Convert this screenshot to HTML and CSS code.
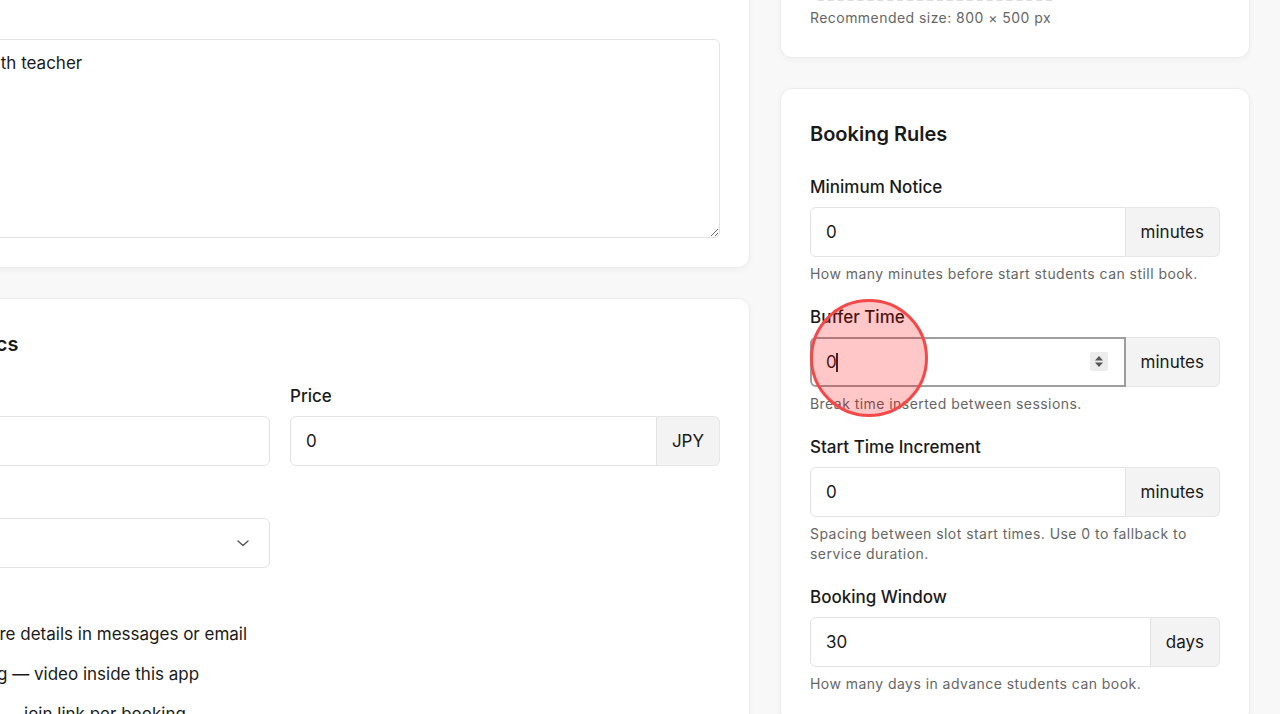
FILE: index.html
```html
<!DOCTYPE html>
<html lang="en">

<head>
    <meta charset="UTF-8">
    <title>Edit Service</title>
    <link rel="stylesheet" href="styles.css">
</head>

<body>
    <div class="page">
        <div class="col col-main">
            <section class="card">
                <h2>Service Details</h2>
                <div class="field">
                    <label>Service Name</label>
                    <input class="input" type="text" value="Private Lesson">
                </div>
                <div class="field">
                    <label>Subtitle</label>
                    <input class="input" type="text" value="Online session">
                </div>
                <div class="field">
                    <label>Description</label>
                    <textarea class="textarea">Private lessons with teacher</textarea>
                </div>
            </section>

            <section class="card">
                <h2>Pricing &amp; Logistics</h2>
                <div class="grid2">
                    <div class="field">
                        <label>Duration</label>
                        <input class="input" type="text" value="">
                    </div>
                    <div class="field">
                        <label>Price</label>
                        <div class="group">
                            <input class="input" type="text" value="0">
                            <span class="addon">JPY</span>
                        </div>
                    </div>
                    <div class="field">
                        <label>Location</label>
                        <div class="select-wrap">
                            <select class="select">
                                <option>Online</option>
                            </select>
                            <svg class="chevron" width="14" height="9" viewBox="0 0 14 9">
                                <polyline points="2,2 7,6.5 12,2" fill="none" stroke="#555" stroke-width="1.4" stroke-linecap="round" stroke-linejoin="round"/>
                            </svg>
                        </div>
                    </div>
                </div>
                <div class="field">
                    <label>Meeting Type</label>
                    <div class="radios">
                        <label class="radio"><span class="dot"></span>In-person — share details in messages or email</label>
                        <label class="radio"><span class="dot"></span>Built-in streaming — video inside this app</label>
                        <label class="radio"><span class="dot"></span>External session — join link per booking</label>
                    </div>
                </div>
            </section>
        </div>

        <div class="col col-side">
            <section class="card">
                <h2>Cover Image</h2>
                <div class="field">
                    <div class="dropzone"></div>
                    <p class="hint">Recommended size: 800 × 500 px</p>
                </div>
            </section>

            <section class="card rules">
                <h2>Booking Rules</h2>
                <div class="field">
                    <label>Minimum Notice</label>
                    <div class="group">
                        <input class="input" type="text" value="0">
                        <span class="addon">minutes</span>
                    </div>
                    <p class="hint">How many minutes before start students can still book.</p>
                </div>
                <div class="field">
                    <label>Buffer Time</label>
                    <div class="group">
                        <input class="input focused" type="text" value="0">
                        <span class="addon">minutes</span>
                        <span class="caret"></span>
                        <span class="spinner">
                            <svg width="18" height="19" viewBox="0 0 18 19">
                                <polygon points="9,4 13,8.5 5,8.5" fill="#555"/>
                                <polygon points="9,15 13,10.5 5,10.5" fill="#555"/>
                            </svg>
                        </span>
                        <span class="tap"></span>
                    </div>
                    <p class="hint">Break time inserted between sessions.</p>
                </div>
                <div class="field">
                    <label>Start Time Increment</label>
                    <div class="group">
                        <input class="input" type="text" value="0">
                        <span class="addon">minutes</span>
                    </div>
                    <p class="hint">Spacing between slot start times. Use 0 to fallback to service duration.</p>
                </div>
                <div class="field">
                    <label>Booking Window</label>
                    <div class="group">
                        <input class="input" type="text" value="30">
                        <span class="addon">days</span>
                    </div>
                    <p class="hint">How many days in advance students can book.</p>
                </div>
            </section>
        </div>
    </div>
</body>

</html>
```

FILE: styles.css
```css
body {
    margin: 0;
    overflow: hidden;
    background-color: #f8f8f8;
    font-family: Inter, "Noto Sans", sans-serif;
    color: #1a1a1a;
}

.page {
    display: flex;
    gap: 30px;
    margin-left: -190px;
    margin-top: -283px;
}

.col {
    display: flex;
    flex-direction: column;
    gap: 30px;
}

.col-main {
    width: 940px;
}

.col-side {
    width: 470px;
}

.card {
    background-color: #fff;
    border: 1px solid #ececec;
    border-radius: 12px;
    box-shadow: 0 2px 6px rgba(0, 0, 0, 0.04);
    padding: 29px;
    display: flex;
    flex-direction: column;
    gap: 20px;
}

.card.rules {
    gap: 21px;
}

.card h2 {
    margin: 0 0 6px;
    padding-top: 2px;
    font-size: 20px;
    font-weight: 600;
    line-height: 28px;
}

.field {
    display: flex;
    flex-direction: column;
}

.field > label {
    font-size: 17px;
    font-weight: 500;
    line-height: 24px;
    margin-bottom: 8px;
}

.input,
.select,
.textarea {
    box-sizing: border-box;
    width: 100%;
    border: 1px solid #e3e3e3;
    border-radius: 6px;
    background-color: #fff;
    font-family: inherit;
    font-size: 17px;
    color: #1a1a1a;
    outline: none;
}

.input,
.select {
    height: 50px;
    padding: 0 15px;
}

.textarea {
    height: 199px;
    padding: 11px 15px;
    line-height: 24px;
}

.grid2 {
    display: grid;
    grid-template-columns: 430px 430px;
    column-gap: 20px;
    row-gap: 20px;
}

.group {
    position: relative;
    display: flex;
}

.group .input {
    flex: 1;
    border-radius: 6px 0 0 6px;
}

.group .input.focused {
    border: 2px solid #9d9d9d;
    padding-left: 14px;
}

.addon {
    display: flex;
    align-items: center;
    padding: 0 15px;
    background-color: #f3f3f3;
    border: 1px solid #e6e6e6;
    border-left: none;
    border-radius: 0 6px 6px 0;
    font-size: 17px;
}

.hint {
    margin: 7px 0 0;
    font-size: 14px;
    line-height: 20px;
    letter-spacing: 0.45px;
    color: #666;
}

.select-wrap {
    position: relative;
}

.select {
    appearance: none;
    color: #1a1a1a;
}

.chevron {
    position: absolute;
    right: 20px;
    top: 21px;
    pointer-events: none;
}

.radios {
    display: flex;
    flex-direction: column;
    gap: 12px;
}

.radio {
    display: flex;
    align-items: center;
    gap: 10px;
    font-size: 17px;
    line-height: 28px;
}

.radio .dot {
    width: 16px;
    height: 16px;
    border: 1px solid #bbb;
    border-radius: 50%;
    box-sizing: border-box;
}

.dropzone {
    width: 250px;
    height: 198px;
    box-sizing: border-box;
    border: 2px dashed #dcdcdc;
    border-radius: 8px;
}

/* focused field decorations */
.caret {
    position: absolute;
    left: 26px;
    top: 16px;
    width: 1.5px;
    height: 19px;
    background-color: #222;
}

.spinner {
    position: absolute;
    left: 280px;
    top: 15px;
    width: 18px;
    height: 19px;
    background-color: #ececec;
    border-radius: 2px;
}

.spinner svg {
    display: block;
}

.tap {
    position: absolute;
    left: 0;
    top: -38px;
    width: 118px;
    height: 118px;
    box-sizing: border-box;
    border: 3px solid #f54848;
    border-radius: 50%;
    background-color: rgba(255, 0, 0, 0.22);
    pointer-events: none;
}
```
